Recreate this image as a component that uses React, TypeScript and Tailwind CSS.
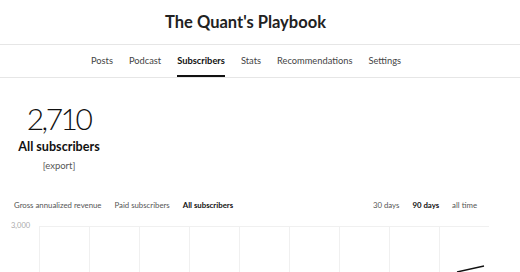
import React from 'react'

const navItems = ['Posts', 'Podcast', 'Subscribers', 'Stats', 'Recommendations', 'Settings']

export default function App() {
  return (
    <div className="w-[520px] h-[272px] overflow-hidden bg-white text-[#1a1a1a]" style={{ fontFamily: 'Lato, "Open Sans", sans-serif' }}>
      <header className="h-[45px] border-b border-[#e6e6e6] flex items-center justify-center">
        <h1 className="text-[16.5px] font-bold text-[#222] mr-[29px] mt-[1px]">The Quant's Playbook</h1>
      </header>

      <nav className="h-[33px] border-b border-[#e6e6e6] flex justify-center gap-[16px] text-[9.3px] text-[#444] pr-[28px]">
        {navItems.map((item) => (
          <div
            key={item}
            className={
              item === 'Subscribers'
                ? 'flex items-center font-bold text-[#111] border-b-2 border-[#111] mt-[2px]'
                : 'flex items-center'
            }
          >
            {item}
          </div>
        ))}
      </nav>

      <section className="w-[118px] flex flex-col items-center pt-[23px]">
        <div className="text-[30px] font-light leading-[34px] tracking-[-2.5px] text-[#111] pr-[1px]">2,710</div>
        <div className="text-[12.6px] font-bold leading-[16px] mt-[4px] text-[#111]">All subscribers</div>
        <div className="text-[9.5px] leading-[12px] mt-[5px] text-[#555]">[export]</div>
      </section>

      <div className="flex justify-between items-center px-[14px] mt-[28px] pr-[43px] text-[7.8px] text-[#555]">
        <div className="flex gap-[13px]">
          <span>Gross annualized revenue</span>
          <span>Paid subscribers</span>
          <span className="font-bold text-[#111]">All subscribers</span>
        </div>
        <div className="flex gap-[13px]">
          <span>30 days</span>
          <span className="font-bold text-[#111]">90 days</span>
          <span>all time</span>
        </div>
      </div>

      <div className="flex mt-[14px]">
        <div className="w-[39px] text-[7.5px] text-[#aaa] pl-[11px] leading-[10px] mt-[-5px]">3,000</div>
        <div className="relative w-[450px] h-[60px] border-t border-[#f0f0f0] grid grid-cols-9">
          {Array.from({ length: 9 }).map((_, i) => (
            <div key={i} className="border-l border-[#f0f0f0]" />
          ))}
          <svg className="absolute left-0 top-0" width="450" height="60" viewBox="0 0 450 60">
            <path d="M418 45 L445 39" stroke="#111" strokeWidth="1.4" fill="none" />
          </svg>
        </div>
      </div>
    </div>
  )
}
